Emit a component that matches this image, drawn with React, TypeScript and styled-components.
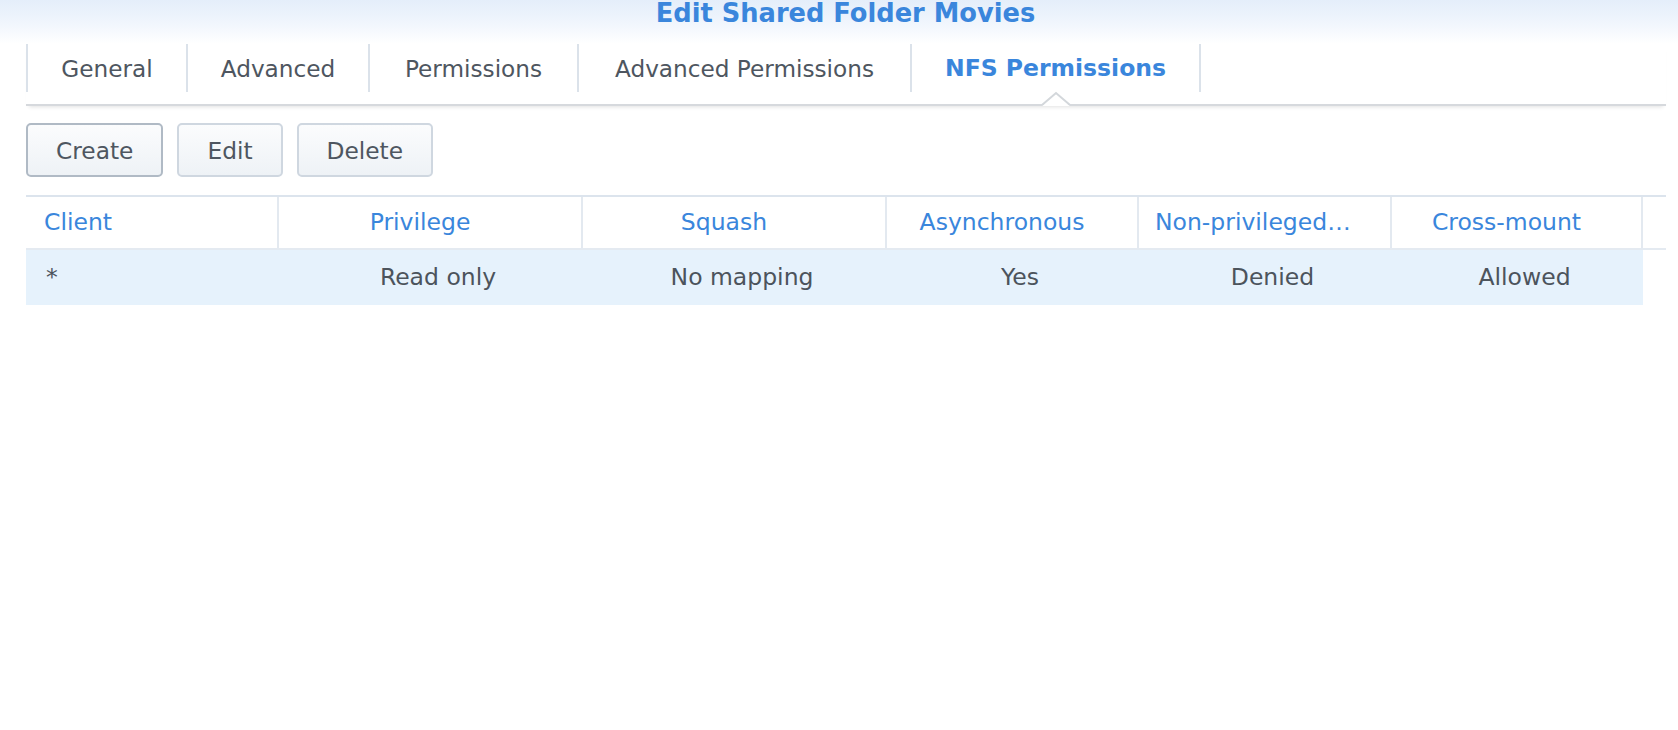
import React from 'react';
import styled, { createGlobalStyle } from 'styled-components';

const GlobalStyle = createGlobalStyle`
  html, body { margin: 0; padding: 0; background: #ffffff; }
  body { font-family: "DejaVu Sans", Verdana, sans-serif; }
  * { box-sizing: border-box; }
`;

const Page = styled.div`
  width: 1678px;
  height: 730px;
  overflow: hidden;
  background: #ffffff;
  display: flex;
  flex-direction: column;
`;

const TitleBar = styled.div`
  height: 44px;
  background: linear-gradient(to bottom, #e4eefa 0%, #f1f6fd 55%, #ffffff 100%);
  display: flex;
  justify-content: center;
  align-items: flex-start;
`;

const Title = styled.h1`
  margin: 0 0 0 13px;
  font-size: 25.7px;
  line-height: 27px;
  font-weight: bold;
  color: #3a86dc;
`;

const Body = styled.div`
  padding: 0 12px 0 26px;
  display: flex;
  flex-direction: column;
`;

const TabStrip = styled.div`
  display: flex;
  padding-bottom: 12px;
  border-bottom: 2px solid #d6d9dd;
  box-shadow: 0 4px 4px -3px rgba(0, 0, 0, 0.12);
`;

const Tab = styled.div<{ $active?: boolean; $last?: boolean; $w: number }>`
  position: relative;
  width: ${p => p.$w}px;
  height: 48px;
  display: flex;
  align-items: center;
  justify-content: center;
  border-left: 2px solid #dbe2ea;
  border-right: ${p => (p.$last ? '2px solid #dbe2ea' : 'none')};
  font-size: ${p => (p.$active ? '23.5px' : '23.2px')};
  font-weight: ${p => (p.$active ? 'bold' : 'normal')};
  color: ${p => (p.$active ? '#3a86dc' : '#4e5660')};
  white-space: nowrap;
`;

const Caret = styled.svg`
  position: absolute;
  top: 100%;
  left: 50%;
  margin-left: -14px;
  width: 28px;
  height: 14px;
  overflow: visible;
`;

const Toolbar = styled.div`
  display: flex;
  gap: 14px;
  margin-top: 17px;
`;

const Button = styled.button<{ $primary?: boolean }>`
  height: 54px;
  padding: 0 28px;
  border-radius: 5px;
  border: 2px solid ${p => (p.$primary ? '#b0bac5' : '#cfd7e0')};
  background: linear-gradient(to bottom, #fbfcfd 0%, #eef2f6 100%);
  font-family: inherit;
  font-size: 23.3px;
  color: #4e5660;
  cursor: pointer;
`;

const COLS = '253px 304px 304px 252px 253px 251px';

const Table = styled.div`
  margin-top: 18px;
  width: 1640px;
  display: flex;
  flex-direction: column;
`;

const HeaderRow = styled.div`
  display: grid;
  grid-template-columns: ${COLS} 23px;
  border-top: 2px solid #dce4ed;
  border-bottom: 2px solid #e4eaf1;
`;

const HeaderCell = styled.div<{ $left?: boolean; $blank?: boolean }>`
  height: 51px;
  line-height: 51px;
  padding: ${p => (p.$left ? '0 8px 0 18px' : '0 36px 0 16px')};
  text-align: ${p => (p.$left ? 'left' : 'center')};
  border-right: ${p => (p.$blank ? 'none' : '2px solid #e3e9f0')};
  font-size: 23.5px;
  color: #3a86dc;
  white-space: nowrap;
  overflow: hidden;
  text-overflow: ellipsis;
`;

const DataRow = styled.div`
  display: grid;
  grid-template-columns: ${COLS};
  width: 1617px;
  background: #e6f2fc;
`;

const DataCell = styled.div<{ $left?: boolean }>`
  height: 55px;
  line-height: 55px;
  padding: ${p => (p.$left ? '0 8px 0 20px' : '0 8px 0 22px')};
  text-align: ${p => (p.$left ? 'left' : 'center')};
  font-size: 23.5px;
  color: #4c545c;
  white-space: nowrap;
  overflow: hidden;
  text-overflow: ellipsis;
`;

const tabs = [
  { label: 'General', w: 160 },
  { label: 'Advanced', w: 182 },
  { label: 'Permissions', w: 209 },
  { label: 'Advanced Permissions', w: 333 },
  { label: 'NFS Permissions', w: 291 },
];
const headers = ['Client', 'Privilege', 'Squash', 'Asynchronous', 'Non-privileged port', 'Cross-mount'];
const row = ['*', 'Read only', 'No mapping', 'Yes', 'Denied', 'Allowed'];

export default function App() {
  return (
    <Page>
      <GlobalStyle />
      <TitleBar>
        <Title>Edit Shared Folder Movies</Title>
      </TitleBar>
      <Body>
        <TabStrip>
          {tabs.map((t, i) => {
            const active = i === tabs.length - 1;
            return (
              <Tab key={t.label} $w={t.w} $active={active} $last={i === tabs.length - 1}>
                {t.label}
                {active && (
                  <Caret viewBox="0 0 28 14">
                    <polygon points="0,14 14,1.5 28,14" fill="#ffffff" />
                    <polyline points="0,13 14,1 28,13" fill="none" stroke="#d3d7db" strokeWidth="2" />
                  </Caret>
                )}
              </Tab>
            );
          })}
        </TabStrip>
        <Toolbar>
          <Button $primary>Create</Button>
          <Button>Edit</Button>
          <Button>Delete</Button>
        </Toolbar>
        <Table>
          <HeaderRow>
            {headers.map((h, i) => (
              <HeaderCell key={h} $left={i === 0}>
                {h}
              </HeaderCell>
            ))}
            <HeaderCell $blank />
          </HeaderRow>
          <DataRow>
            {row.map((c, i) => (
              <DataCell key={i} $left={i === 0}>
                {c}
              </DataCell>
            ))}
          </DataRow>
        </Table>
      </Body>
    </Page>
  );
}
